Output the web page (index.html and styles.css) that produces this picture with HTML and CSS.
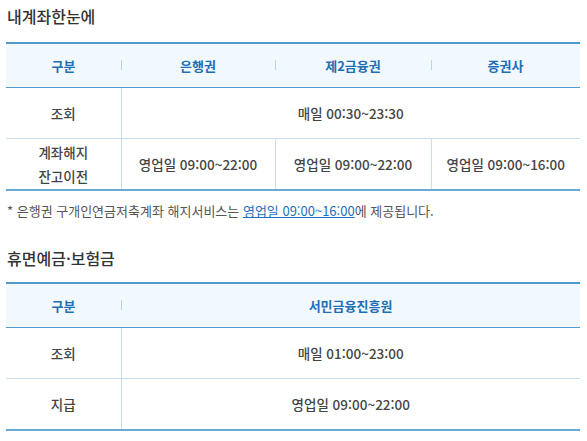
FILE: index.html
```html
<!DOCTYPE html>
<html lang="ko">
<head>
<meta charset="utf-8">
<link rel="stylesheet" href="styles.css">
</head>
<body>
<section class="block">
  <h2 class="title">내계좌한눈에</h2>
  <table class="tbl">
    <colgroup><col class="c1"><col class="c2"><col class="c3"><col></colgroup>
    <thead>
      <tr><th>구분</th><th>은행권</th><th>제2금융권</th><th>증권사</th></tr>
    </thead>
    <tbody>
      <tr><td>조회</td><td colspan="3">매일 00:30~23:30</td></tr>
      <tr><td>계좌해지<br>잔고이전</td><td>영업일 09:00~22:00</td><td>영업일 09:00~22:00</td><td>영업일 09:00~16:00</td></tr>
    </tbody>
  </table>
  <p class="note">* 은행권 구개인연금저축계좌 해지서비스는 <a href="#">영업일 09:00~16:00</a>에 제공됩니다.</p>
</section>
<section class="block second">
  <h2 class="title">휴면예금·보험금</h2>
  <table class="tbl">
    <colgroup><col class="c1"><col></colgroup>
    <thead>
      <tr><th>구분</th><th>서민금융진흥원</th></tr>
    </thead>
    <tbody>
      <tr><td>조회</td><td>매일 01:00~23:00</td></tr>
      <tr><td>지급</td><td>영업일 09:00~22:00</td></tr>
    </tbody>
  </table>
</section>
</body>
</html>
```
FILE: styles.css
```css
html, body {
  margin: 0;
  padding: 0;
  background: #fff;
}
body {
  padding: 0 7px 0 6px;
  font-family: "Noto Sans CJK KR", "Noto Sans", sans-serif;
  color: #444;
}
.title {
  margin: 0;
  padding: 4px 0 0 1px;
  height: 42px;
  box-sizing: border-box;
  font-size: 16px;
  line-height: 24px;
  font-weight: 500;
  color: #333;
}
.second .title {
  height: 44px;
  padding-top: 8px;
}
.tbl {
  width: 100%;
  border-collapse: collapse;
  table-layout: fixed;
  border-top: 2px solid #4f9bd0;
  border-bottom: 2px solid #6aaad8;
}
.c1 { width: 115px; }
.c2 { width: 154px; }
.c3 { width: 156px; }
.tbl th {
  height: 43px;
  padding: 0;
  background: #f1f8fe;
  color: #1f6fb4;
  font-size: 13px;
  font-weight: 700;
  border-bottom: 1px solid #4f9bd0;
  position: relative;
}
.tbl th + th::before {
  content: "";
  position: absolute;
  left: 0;
  top: 16px;
  height: 10px;
  width: 1px;
  background: #b9d5ec;
}
.tbl td {
  height: 50px;
  padding: 0;
  text-align: center;
  font-size: 13.5px;
  line-height: 24px;
  font-weight: 500;
  color: #444;
  border-bottom: 1px solid #c9def0;
}
.tbl td + td {
  border-left: 1px solid #c9def0;
}
.tbl tbody tr:last-child td {
  border-bottom: none;
}
.note {
  margin: 0;
  padding: 11px 0 0 1px;
  height: 47px;
  box-sizing: border-box;
  font-size: 13px;
  line-height: 18px;
  color: #555;
}
.note a {
  color: #1a6fc0;
  text-decoration: underline;
}
```
